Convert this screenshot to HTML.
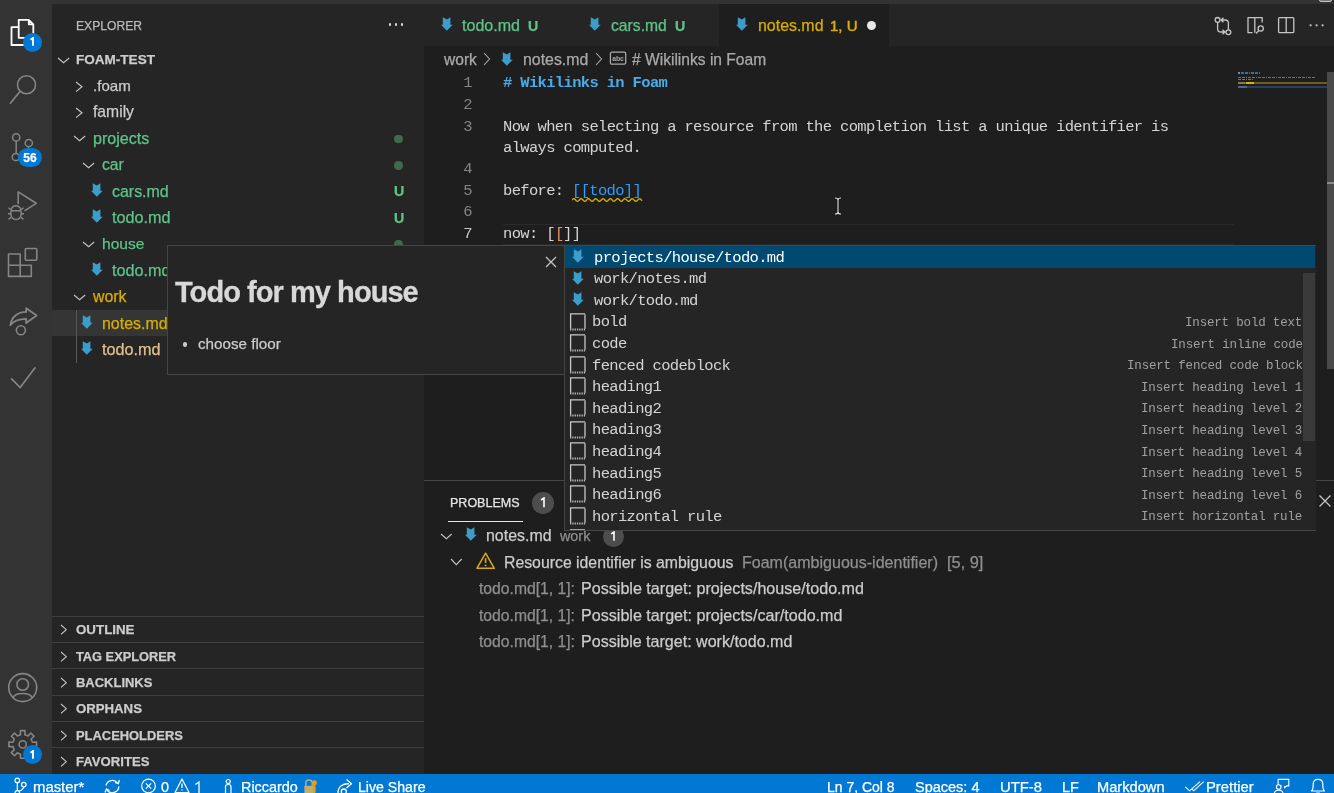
<!DOCTYPE html>
<html><head><meta charset="utf-8"><style>
html,body{margin:0;padding:0;}
body{width:1334px;height:793px;overflow:hidden;position:relative;background:#1e1e1e;}
div,svg{position:absolute;}
svg{will-change:transform;}
.t{white-space:pre;will-change:transform;}
#sg{position:absolute;left:0;top:0;width:1334px;height:793px;overflow:hidden;}
</style></head><body>
<div style="left:0px;top:0px;width:1334px;height:4px;background:#333333;"></div>
<div style="left:0px;top:4px;width:52px;height:770px;background:#333333;"></div>
<div style="left:52px;top:4px;width:372px;height:770px;background:#252526;"></div>
<div style="left:424px;top:4px;width:910px;height:42px;background:#252526;"></div>
<div style="left:719px;top:4px;width:170px;height:42px;background:#1e1e1e;"></div>
<div style="left:424px;top:46px;width:910px;height:728px;background:#1e1e1e;"></div>
<div style="left:0px;top:774px;width:1334px;height:19px;background:#0078d4;"></div>
<svg style="left:0px;top:4px;" width="52" height="52" viewBox="0 0 52 52">
<path d="M18.7 23.1 H11.5 V41 H30" fill="none" stroke="#fff" stroke-width="1.8" stroke-linejoin="round"/>
<path d="M18.7 15.8 H28.8 L33.3 20.3 V33.8 H18.7 Z M28.8 15.8 V20.3 H33.3" fill="none" stroke="#fff" stroke-width="1.8" stroke-linejoin="round"/>
</svg>
<div style="left:23.2px;top:33px;width:18.6px;height:18.6px;background:#0078d4;border-radius:50%"></div>
<svg style="left:28.1px;top:37.3px;" width="8" height="9.700000000000003" viewBox="0 0 8 9.700000000000003"><path d="M2.54 2.69 L5 1 V8.700000000000003" fill="none" stroke="#fff" stroke-width="1.9" stroke-linejoin="miter"/></svg>
<svg style="left:0px;top:60px;" width="52" height="52" viewBox="0 0 52 52">
<circle cx="26.5" cy="24.8" r="9" fill="none" stroke="#858585" stroke-width="1.6"/>
<path d="M20 31.5 L10.5 43" stroke="#858585" stroke-width="1.8" stroke-linecap="round"/>
</svg>
<svg style="left:0px;top:120px;" width="52" height="52" viewBox="0 0 52 52">
<circle cx="16.2" cy="17.4" r="3.6" fill="none" stroke="#858585" stroke-width="1.5"/>
<circle cx="28.8" cy="23" r="3.6" fill="none" stroke="#858585" stroke-width="1.5"/>
<circle cx="15.8" cy="37" r="3.6" fill="none" stroke="#858585" stroke-width="1.5"/>
<path d="M16.2 21 V33.4 M28.8 26.6 Q28 32 19.4 35.5" fill="none" stroke="#858585" stroke-width="1.5"/>
</svg>
<div style="left:18px;top:147.5px;width:23.8px;height:19px;background:#0078d4;border-radius:9.5px"></div>
<div class="t" style="left:18.00px;top:151.00px;font:bold 12px/15.6px 'Liberation Sans', sans-serif;color:#fff;-webkit-text-stroke:0.25px #fff;width:23.8px;text-align:center">56</div>
<svg style="left:0px;top:180px;" width="52" height="52" viewBox="0 0 52 52">
<path d="M18.2 24.3 V11.9 L36.2 23.3 L24.5 30.9" fill="none" stroke="#858585" stroke-width="1.6" stroke-linejoin="round"/>
<path d="M10.8 33 C10.8 28 12.5 25.8 16 25.8 C19.5 25.8 21.2 28 21.2 33 C21.2 37.5 19 39.5 16 39.5 C13 39.5 10.8 37.5 10.8 33 Z M10.9 30.8 H21.1" fill="none" stroke="#858585" stroke-width="1.5"/>
<path d="M8.5 27.8 L10.9 29.6 M8 33.8 H10.8 M8.5 39.4 L11.1 37.4 M23.5 27.8 L21.1 29.6 M24 33.8 H21.2 M23.5 39.4 L20.9 37.4" stroke="#858585" stroke-width="1.4"/>
</svg>
<svg style="left:0px;top:240px;" width="52" height="52" viewBox="0 0 52 52">
<path d="M8.5 14 h11.7 v11.3 h11.1 v11.1 h-22.8 z M8.5 25.3 h11.7 v11.1" fill="none" stroke="#858585" stroke-width="1.6" stroke-linejoin="round"/>
<rect x="25.3" y="8.5" width="11.5" height="11.7" rx="1" fill="none" stroke="#858585" stroke-width="1.6"/>
</svg>
<svg style="left:0px;top:300px;" width="52" height="52" viewBox="0 0 52 52">
<path d="M10.3 25.3 C11.5 17 17.5 11.9 26.2 11.9 V8.2 L36.6 15.6 L26.2 23.1 V18.8 C19.5 18.8 13.5 20.8 10.3 25.3 Z" fill="none" stroke="#858585" stroke-width="1.8" stroke-linejoin="round"/>
<circle cx="20.9" cy="30.3" r="4.5" fill="none" stroke="#858585" stroke-width="1.6"/>
</svg>
<svg style="left:0px;top:360px;" width="52" height="52" viewBox="0 0 52 52">
<path d="M11.1 18.4 L20.2 27.5 L35.4 7.3" fill="none" stroke="#858585" stroke-width="1.7"/>
</svg>
<svg style="left:0px;top:660px;" width="52" height="52" viewBox="0 0 52 52">
<circle cx="22.7" cy="27.6" r="14" fill="none" stroke="#858585" stroke-width="1.6"/>
<circle cx="22.7" cy="24.5" r="5.8" fill="none" stroke="#858585" stroke-width="1.6"/>
<path d="M13 38 C15 32 30 32 32.4 38" fill="none" stroke="#858585" stroke-width="1.6"/>
</svg>
<svg style="left:0px;top:720px;" width="52" height="52" viewBox="0 0 52 52">
<path d="M32.46 22.22 L36.52 22.17 L36.52 26.63 L32.46 26.58 L31.14 29.76 L34.05 32.60 L30.90 35.75 L28.06 32.84 L24.88 34.16 L24.93 38.22 L20.47 38.22 L20.52 34.16 L17.34 32.84 L14.50 35.75 L11.35 32.60 L14.26 29.76 L12.94 26.58 L8.88 26.63 L8.88 22.17 L12.94 22.22 L14.26 19.04 L11.35 16.20 L14.50 13.05 L17.34 15.96 L20.52 14.64 L20.47 10.58 L24.93 10.58 L24.88 14.64 L28.06 15.96 L30.90 13.05 L34.05 16.20 L31.14 19.04 Z" fill="none" stroke="#858585" stroke-width="1.6" stroke-linejoin="round"/>
<circle cx="22.7" cy="24.4" r="3.6" fill="none" stroke="#858585" stroke-width="1.6"/>
</svg>
<div style="left:22.9px;top:745.3px;width:18.8px;height:18.8px;background:#0078d4;border-radius:50%"></div>
<svg style="left:28.1px;top:750.0px;" width="8" height="9.700000000000045" viewBox="0 0 8 9.700000000000045"><path d="M2.54 2.69 L5 1 V8.700000000000045" fill="none" stroke="#fff" stroke-width="1.9" stroke-linejoin="miter"/></svg>
<div class="t" style="left:75.70px;top:19.00px;font:12.12px/15.76px 'Liberation Sans', sans-serif;color:#bbbbbb;-webkit-text-stroke:0.25px #bbbbbb;">EXPLORER</div>
<div style="left:388.7px;top:23.2px;width:2.6px;height:2.6px;background:#dcdcdc;border-radius:50%"></div>
<div style="left:394.7px;top:23.2px;width:2.6px;height:2.6px;background:#dcdcdc;border-radius:50%"></div>
<div style="left:400.7px;top:23.2px;width:2.6px;height:2.6px;background:#dcdcdc;border-radius:50%"></div>
<svg style="left:56.85px;top:56.75px;" width="13.2" height="7.7" viewBox="0 0 13.2 7.7"><path d="M1 1 L6.6 5.7 L12.2 1" fill="none" stroke="#c5c5c5" stroke-width="1.1"/></svg>
<div class="t" style="left:75.50px;top:51.00px;font:bold 13.54px/17.6px 'Liberation Sans', sans-serif;color:#cccccc;-webkit-text-stroke:0.25px #cccccc;">FOAM-TEST</div>
<div style="left:52px;top:310.0px;width:372px;height:26.4px;background:#353535;"></div>
<div style="left:76px;top:310.0px;width:1px;height:52.8px;background:#585858;"></div>
<svg style="left:75.35px;top:81.05000000000001px;" width="9" height="11.6" viewBox="0 0 9 11.6"><path d="M1 1 L7 5.8 L1 10.6" fill="none" stroke="#c5c5c5" stroke-width="1.15"/></svg>
<div class="t" style="left:93.30px;top:76.00px;font:15.12px/19.66px 'Liberation Sans', sans-serif;color:#cccccc;-webkit-text-stroke:0.25px #cccccc;">.foam</div>
<svg style="left:75.35px;top:107.45000000000002px;" width="9" height="11.6" viewBox="0 0 9 11.6"><path d="M1 1 L7 5.8 L1 10.6" fill="none" stroke="#c5c5c5" stroke-width="1.15"/></svg>
<div class="t" style="left:92.90px;top:102.00px;font:15.69px/20.4px 'Liberation Sans', sans-serif;color:#cccccc;-webkit-text-stroke:0.25px #cccccc;">family</div>
<svg style="left:72.75px;top:135.25px;" width="13.2" height="7.7" viewBox="0 0 13.2 7.7"><path d="M1 1 L6.6 5.7 L12.2 1" fill="none" stroke="#c5c5c5" stroke-width="1.1"/></svg>
<div class="t" style="left:92.90px;top:128.00px;font:16.1px/20.93px 'Liberation Sans', sans-serif;color:#5fc488;-webkit-text-stroke:0.25px #5fc488;">projects</div>
<div style="left:394px;top:134.6px;width:8.6px;height:8.6px;background:#3f6a4f;border-radius:50%"></div>
<svg style="left:82.25px;top:161.65px;" width="13.2" height="7.7" viewBox="0 0 13.2 7.7"><path d="M1 1 L6.6 5.7 L12.2 1" fill="none" stroke="#c5c5c5" stroke-width="1.1"/></svg>
<div class="t" style="left:102.20px;top:155.00px;font:15.68px/20.38px 'Liberation Sans', sans-serif;color:#5fc488;-webkit-text-stroke:0.25px #5fc488;">car</div>
<div style="left:394px;top:161.0px;width:8.6px;height:8.6px;background:#3f6a4f;border-radius:50%"></div>
<svg style="left:90.60000000000001px;top:182.79999999999998px;" width="12" height="14" viewBox="0 0 12 14"><path d="M1.8 0.3 L5.8 2.4 L9.4 0.3 L9.4 7.8 L11.8 7.8 L5.8 13.7 L0 7.8 L1.8 7.8 Z" fill="#3b9dc9"/></svg>
<div class="t" style="left:111.60px;top:182.00px;font:15.95px/20.73px 'Liberation Sans', sans-serif;color:#5fc488;-webkit-text-stroke:0.25px #5fc488;">cars.md</div>
<div class="t" style="left:394.00px;top:182.00px;font:bold 14.2px/18.46px 'Liberation Sans', sans-serif;color:#5fc488;-webkit-text-stroke:0.25px #5fc488;">U</div>
<svg style="left:90.60000000000001px;top:209.2px;" width="12" height="14" viewBox="0 0 12 14"><path d="M1.8 0.3 L5.8 2.4 L9.4 0.3 L9.4 7.8 L11.8 7.8 L5.8 13.7 L0 7.8 L1.8 7.8 Z" fill="#3b9dc9"/></svg>
<div class="t" style="left:111.60px;top:207.00px;font:16.22px/21.09px 'Liberation Sans', sans-serif;color:#5fc488;-webkit-text-stroke:0.25px #5fc488;">todo.md</div>
<div class="t" style="left:394.00px;top:209.00px;font:bold 14.2px/18.46px 'Liberation Sans', sans-serif;color:#5fc488;-webkit-text-stroke:0.25px #5fc488;">U</div>
<svg style="left:82.25px;top:240.85px;" width="13.2" height="7.7" viewBox="0 0 13.2 7.7"><path d="M1 1 L6.6 5.7 L12.2 1" fill="none" stroke="#c5c5c5" stroke-width="1.1"/></svg>
<div class="t" style="left:102.40px;top:234.00px;font:15.56px/20.23px 'Liberation Sans', sans-serif;color:#5fc488;-webkit-text-stroke:0.25px #5fc488;">house</div>
<div style="left:394px;top:240.2px;width:8.6px;height:8.6px;background:#3f6a4f;border-radius:50%"></div>
<svg style="left:90.60000000000001px;top:262.0px;" width="12" height="14" viewBox="0 0 12 14"><path d="M1.8 0.3 L5.8 2.4 L9.4 0.3 L9.4 7.8 L11.8 7.8 L5.8 13.7 L0 7.8 L1.8 7.8 Z" fill="#3b9dc9"/></svg>
<div class="t" style="left:111.80px;top:260.00px;font:16.22px/21.09px 'Liberation Sans', sans-serif;color:#5fc488;-webkit-text-stroke:0.25px #5fc488;">todo.md</div>
<svg style="left:72.75px;top:293.65000000000003px;" width="13.2" height="7.7" viewBox="0 0 13.2 7.7"><path d="M1 1 L6.6 5.7 L12.2 1" fill="none" stroke="#c5c5c5" stroke-width="1.1"/></svg>
<div class="t" style="left:92.74px;top:287.00px;font:15.87px/20.63px 'Liberation Sans', sans-serif;color:#d9ae00;-webkit-text-stroke:0.25px #d9ae00;">work</div>
<svg style="left:80.9px;top:314.8px;" width="12" height="14" viewBox="0 0 12 14"><path d="M1.8 0.3 L5.8 2.4 L9.4 0.3 L9.4 7.8 L11.8 7.8 L5.8 13.7 L0 7.8 L1.8 7.8 Z" fill="#3b9dc9"/></svg>
<div class="t" style="left:102.40px;top:314.00px;font:15.95px/20.73px 'Liberation Sans', sans-serif;color:#d9ae00;-webkit-text-stroke:0.25px #d9ae00;">notes.md</div>
<svg style="left:80.9px;top:341.2px;" width="12" height="14" viewBox="0 0 12 14"><path d="M1.8 0.3 L5.8 2.4 L9.4 0.3 L9.4 7.8 L11.8 7.8 L5.8 13.7 L0 7.8 L1.8 7.8 Z" fill="#3b9dc9"/></svg>
<div class="t" style="left:102.20px;top:339.00px;font:16.22px/21.09px 'Liberation Sans', sans-serif;color:#e2c08d;-webkit-text-stroke:0.25px #e2c08d;">todo.md</div>
<div style="left:52px;top:615.7px;width:372px;height:1px;background:#3f3f3f;"></div>
<svg style="left:60.35px;top:624.25px;" width="8.3" height="11.4" viewBox="0 0 8.3 11.4"><path d="M1 1 L6.3 5.7 L1 10.4" fill="none" stroke="#c5c5c5" stroke-width="1.1"/></svg>
<div class="t" style="left:75.80px;top:621.00px;font:bold 13.33px/17.33px 'Liberation Sans', sans-serif;color:#cccccc;-webkit-text-stroke:0.25px #cccccc;">OUTLINE</div>
<div style="left:52px;top:642.0300000000001px;width:372px;height:1px;background:#3f3f3f;"></div>
<svg style="left:60.35px;top:650.58px;" width="8.3" height="11.4" viewBox="0 0 8.3 11.4"><path d="M1 1 L6.3 5.7 L1 10.4" fill="none" stroke="#c5c5c5" stroke-width="1.1"/></svg>
<div class="t" style="left:75.80px;top:649.00px;font:bold 12.81px/16.65px 'Liberation Sans', sans-serif;color:#cccccc;-webkit-text-stroke:0.25px #cccccc;">TAG EXPLORER</div>
<div style="left:52px;top:668.36px;width:372px;height:1px;background:#3f3f3f;"></div>
<svg style="left:60.35px;top:676.91px;" width="8.3" height="11.4" viewBox="0 0 8.3 11.4"><path d="M1 1 L6.3 5.7 L1 10.4" fill="none" stroke="#c5c5c5" stroke-width="1.1"/></svg>
<div class="t" style="left:75.80px;top:675.00px;font:bold 12.97px/16.86px 'Liberation Sans', sans-serif;color:#cccccc;-webkit-text-stroke:0.25px #cccccc;">BACKLINKS</div>
<div style="left:52px;top:694.69px;width:372px;height:1px;background:#3f3f3f;"></div>
<svg style="left:60.35px;top:703.24px;" width="8.3" height="11.4" viewBox="0 0 8.3 11.4"><path d="M1 1 L6.3 5.7 L1 10.4" fill="none" stroke="#c5c5c5" stroke-width="1.1"/></svg>
<div class="t" style="left:75.80px;top:700.00px;font:bold 13.2px/17.16px 'Liberation Sans', sans-serif;color:#cccccc;-webkit-text-stroke:0.25px #cccccc;">ORPHANS</div>
<div style="left:52px;top:721.02px;width:372px;height:1px;background:#3f3f3f;"></div>
<svg style="left:60.35px;top:729.5699999999999px;" width="8.3" height="11.4" viewBox="0 0 8.3 11.4"><path d="M1 1 L6.3 5.7 L1 10.4" fill="none" stroke="#c5c5c5" stroke-width="1.1"/></svg>
<div class="t" style="left:75.80px;top:728.00px;font:bold 12.91px/16.78px 'Liberation Sans', sans-serif;color:#cccccc;-webkit-text-stroke:0.25px #cccccc;">PLACEHOLDERS</div>
<div style="left:52px;top:747.35px;width:372px;height:1px;background:#3f3f3f;"></div>
<svg style="left:60.35px;top:755.9px;" width="8.3" height="11.4" viewBox="0 0 8.3 11.4"><path d="M1 1 L6.3 5.7 L1 10.4" fill="none" stroke="#c5c5c5" stroke-width="1.1"/></svg>
<div class="t" style="left:75.80px;top:753.00px;font:bold 13.14px/17.08px 'Liberation Sans', sans-serif;color:#cccccc;-webkit-text-stroke:0.25px #cccccc;">FAVORITES</div>
<div class="t" style="left:462.20px;top:15.00px;font:16.06px/20.88px 'Liberation Sans', sans-serif;color:#5fc488;-webkit-text-stroke:0.25px #5fc488;">todo.md</div>
<div class="t" style="left:528.00px;top:17.00px;font:bold 14.2px/18.46px 'Liberation Sans', sans-serif;color:#5fc488;-webkit-text-stroke:0.25px #5fc488;">U</div>
<svg style="left:440.9px;top:16.7px;" width="12" height="14" viewBox="0 0 12 14"><path d="M1.8 0.3 L5.8 2.4 L9.4 0.3 L9.4 7.8 L11.8 7.8 L5.8 13.7 L0 7.8 L1.8 7.8 Z" fill="#3b9dc9"/></svg>
<div class="t" style="left:611.10px;top:16.00px;font:15.7px/20.41px 'Liberation Sans', sans-serif;color:#5fc488;-webkit-text-stroke:0.25px #5fc488;">cars.md</div>
<div class="t" style="left:674.80px;top:17.00px;font:bold 14.2px/18.46px 'Liberation Sans', sans-serif;color:#5fc488;-webkit-text-stroke:0.25px #5fc488;">U</div>
<svg style="left:589.4px;top:16.7px;" width="12" height="14" viewBox="0 0 12 14"><path d="M1.8 0.3 L5.8 2.4 L9.4 0.3 L9.4 7.8 L11.8 7.8 L5.8 13.7 L0 7.8 L1.8 7.8 Z" fill="#3b9dc9"/></svg>
<svg style="left:736.4px;top:16.7px;" width="12" height="14" viewBox="0 0 12 14"><path d="M1.8 0.3 L5.8 2.4 L9.4 0.3 L9.4 7.8 L11.8 7.8 L5.8 13.7 L0 7.8 L1.8 7.8 Z" fill="#3b9dc9"/></svg>
<div class="t" style="left:757.70px;top:16.00px;font:15.93px/20.71px 'Liberation Sans', sans-serif;color:#d9ae00;-webkit-text-stroke:0.25px #d9ae00;">notes.md</div>
<div class="t" style="left:829.80px;top:16.00px;font:15px/19.5px 'Liberation Sans', sans-serif;color:#d9ae00;-webkit-text-stroke:0.5px #d9ae00;">1, U</div>
<div style="left:866.8px;top:20.6px;width:9.6px;height:9.6px;background:#e8e8e8;border-radius:50%"></div>
<svg style="left:1205px;top:10px;" width="120" height="32" viewBox="0 0 120 32">
<circle cx="12.6" cy="9.9" r="2.4" fill="none" stroke="#c5c5c5" stroke-width="1.3"/>
<circle cx="23.4" cy="22.2" r="2.4" fill="none" stroke="#c5c5c5" stroke-width="1.3"/>
<path d="M12.6 12.3 V19 Q12.6 22 16 22 H19.5 M17.5 19.8 L20 22 L17.5 24.2" fill="none" stroke="#c5c5c5" stroke-width="1.3"/>
<path d="M23.4 19.8 V13 Q23.4 10 20 10 H16.5 M18.5 7.8 L16 10 L18.5 12.2" fill="none" stroke="#c5c5c5" stroke-width="1.3"/>
<path d="M47.5 22.7 H43 V7.6 H57.2 V12.5 M49.8 7.6 V22.7" fill="none" stroke="#c5c5c5" stroke-width="1.3" stroke-linejoin="round"/>
<circle cx="55.7" cy="18.5" r="2.6" fill="none" stroke="#c5c5c5" stroke-width="1.3"/>
<path d="M53.8 20.5 L51 23.5" stroke="#c5c5c5" stroke-width="1.3"/>
<rect x="73.6" y="7.6" width="15.2" height="15.1" rx="1" fill="none" stroke="#c5c5c5" stroke-width="1.3"/>
<path d="M81.2 7.6 V22.7" stroke="#c5c5c5" stroke-width="1.3"/>
<circle cx="105.6" cy="15.3" r="1.1" fill="#c5c5c5"/><circle cx="111.6" cy="15.3" r="1.1" fill="#c5c5c5"/><circle cx="117.6" cy="15.3" r="1.1" fill="#c5c5c5"/>
</svg>
<div style="left:1319px;top:-4px;width:13px;height:6px;background:#777777;border:1px solid #c4c4c4;border-radius:2px;box-sizing:border-box"></div>
<div class="t" style="left:443.54px;top:50.00px;font:15.58px/20.25px 'Liberation Sans', sans-serif;color:#a9a9a9;-webkit-text-stroke:0.25px #a9a9a9;">work</div>
<svg style="left:483.3px;top:52.3px;" width="8.5" height="14" viewBox="0 0 8.5 14"><path d="M1 1 L6.5 7.0 L1 13" fill="none" stroke="#a9a9a9" stroke-width="1.1"/></svg>
<svg style="left:501.0px;top:51.5px;" width="12" height="14" viewBox="0 0 12 14"><path d="M1.8 0.3 L5.8 2.4 L9.4 0.3 L9.4 7.8 L11.8 7.8 L5.8 13.7 L0 7.8 L1.8 7.8 Z" fill="#3b9dc9"/></svg>
<div class="t" style="left:523.00px;top:50.00px;font:15.88px/20.64px 'Liberation Sans', sans-serif;color:#a9a9a9;-webkit-text-stroke:0.25px #a9a9a9;">notes.md</div>
<svg style="left:595px;top:52.3px;" width="8.5" height="14" viewBox="0 0 8.5 14"><path d="M1 1 L6.5 7.0 L1 13" fill="none" stroke="#a9a9a9" stroke-width="1.1"/></svg>
<svg style="left:609px;top:50.6px;" width="18" height="15" viewBox="0 0 18 15"><rect x="1.4" y="1.2" width="15.3" height="12" rx="1.5" fill="none" stroke="#a9a9a9" stroke-width="1.3"/><text x="9" y="9.6" font-family="Liberation Sans" font-weight="bold" font-size="6.8" fill="#a9a9a9" text-anchor="middle">abc</text></svg>
<div class="t" style="left:631.50px;top:50.00px;font:15.59px/20.27px 'Liberation Sans', sans-serif;color:#a9a9a9;-webkit-text-stroke:0.25px #a9a9a9;"># Wikilinks in Foam</div>
<div class="t" style="left:446.00px;top:73.00px;font:15.5px/20.15px 'Liberation Mono', monospace;color:#858585;letter-spacing:-0.66px;width:26px;text-align:right">1</div>
<div class="t" style="left:446.00px;top:95.00px;font:15.5px/20.15px 'Liberation Mono', monospace;color:#858585;letter-spacing:-0.66px;width:26px;text-align:right">2</div>
<div class="t" style="left:446.00px;top:117.00px;font:15.5px/20.15px 'Liberation Mono', monospace;color:#858585;letter-spacing:-0.66px;width:26px;text-align:right">3</div>
<div class="t" style="left:446.00px;top:159.00px;font:15.5px/20.15px 'Liberation Mono', monospace;color:#858585;letter-spacing:-0.66px;width:26px;text-align:right">4</div>
<div class="t" style="left:446.00px;top:181.00px;font:15.5px/20.15px 'Liberation Mono', monospace;color:#858585;letter-spacing:-0.66px;width:26px;text-align:right">5</div>
<div class="t" style="left:446.00px;top:202.00px;font:15.5px/20.15px 'Liberation Mono', monospace;color:#858585;letter-spacing:-0.66px;width:26px;text-align:right">6</div>
<div class="t" style="left:446.00px;top:224.00px;font:15.5px/20.15px 'Liberation Mono', monospace;color:#c6c6c6;letter-spacing:-0.66px;width:26px;text-align:right">7</div>
<div style="left:502.5px;top:224.4px;width:731.5px;height:20.6px;background:transparent;border-top:1px solid #2a2a2a;border-bottom:1px solid #2a2a2a;box-sizing:border-box"></div>
<div class="t" style="left:502.70px;top:73.00px;font:bold 15.5px/20.15px 'Liberation Mono', monospace;color:#4aabe9;letter-spacing:-0.66px"># Wikilinks in Foam</div>
<div class="t" style="left:502.70px;top:117.00px;font:15.5px/20.15px 'Liberation Mono', monospace;color:#d4d4d4;letter-spacing:-0.66px">Now when selecting a resource from the completion list a unique identifier is</div>
<div class="t" style="left:502.70px;top:138.00px;font:15.5px/20.15px 'Liberation Mono', monospace;color:#d4d4d4;letter-spacing:-0.66px">always computed.</div>
<div class="t" style="left:502.70px;top:181.00px;font:15.5px/20.15px 'Liberation Mono', monospace;color:#d4d4d4;letter-spacing:-0.66px">before: </div>
<div class="t" style="left:571.82px;top:181.00px;font:15.5px/20.15px 'Liberation Mono', monospace;color:#2a9dff;letter-spacing:-0.66px">[[todo]]</div>
<svg style="left:572px;top:197.4px;" width="72" height="6" viewBox="0 0 72 6"><path d="M0.00 3.00 L0.50 2.46 L1.00 2.01 L1.50 1.75 L2.00 1.71 L2.50 1.91 L3.00 2.31 L3.50 2.83 L4.00 3.39 L4.50 3.87 L5.00 4.19 L5.50 4.30 L6.00 4.17 L6.50 3.83 L7.00 3.33 L7.50 2.78 L8.00 2.26 L8.50 1.88 L9.00 1.71 L9.50 1.77 L10.00 2.05 L10.50 2.51 L11.00 3.06 L11.50 3.59 L12.00 4.02 L12.50 4.26 L13.00 4.28 L13.50 4.06 L14.00 3.64 L14.50 3.11 L15.00 2.56 L15.50 2.09 L16.00 1.79 L16.50 1.70 L17.00 1.86 L17.50 2.22 L18.00 2.72 L18.50 3.28 L19.00 3.78 L19.50 4.14 L20.00 4.30 L20.50 4.21 L21.00 3.91 L21.50 3.44 L22.00 2.89 L22.50 2.36 L23.00 1.94 L23.50 1.72 L24.00 1.74 L24.50 1.98 L25.00 2.41 L25.50 2.94 L26.00 3.49 L26.50 3.95 L27.00 4.23 L27.50 4.29 L28.00 4.12 L28.50 3.74 L29.00 3.22 L29.50 2.67 L30.00 2.17 L30.50 1.83 L31.00 1.70 L31.50 1.81 L32.00 2.13 L32.50 2.61 L33.00 3.17 L33.50 3.69 L34.00 4.09 L34.50 4.29 L35.00 4.25 L35.50 3.99 L36.00 3.54 L36.50 3.00 L37.00 2.46 L37.50 2.01 L38.00 1.75 L38.50 1.71 L39.00 1.91 L39.50 2.31 L40.00 2.83 L40.50 3.39 L41.00 3.87 L41.50 4.19 L42.00 4.30 L42.50 4.17 L43.00 3.83 L43.50 3.33 L44.00 2.78 L44.50 2.26 L45.00 1.88 L45.50 1.71 L46.00 1.77 L46.50 2.05 L47.00 2.51 L47.50 3.06 L48.00 3.59 L48.50 4.02 L49.00 4.26 L49.50 4.28 L50.00 4.06 L50.50 3.64 L51.00 3.11 L51.50 2.56 L52.00 2.09 L52.50 1.79 L53.00 1.70 L53.50 1.86 L54.00 2.22 L54.50 2.72 L55.00 3.28 L55.50 3.78 L56.00 4.14 L56.50 4.30 L57.00 4.21 L57.50 3.91 L58.00 3.44 L58.50 2.89 L59.00 2.36 L59.50 1.94 L60.00 1.72 L60.50 1.74 L61.00 1.98 L61.50 2.41 L62.00 2.94 L62.50 3.49 L63.00 3.95 L63.50 4.23 L64.00 4.29 L64.50 4.12 L65.00 3.74 L65.50 3.22 L66.00 2.67 L66.50 2.17 L67.00 1.83 L67.50 1.70 L68.00 1.81 L68.50 2.13 L69.00 2.61 L69.50 3.17 L70.00 3.69" fill="none" stroke="#d2a800" stroke-width="1.4"/></svg>
<div class="t" style="left:502.70px;top:224.00px;font:15.5px/20.15px 'Liberation Mono', monospace;color:#d4d4d4;letter-spacing:-0.66px">now: [</div>
<div class="t" style="left:554.54px;top:224.00px;font:15.5px/20.15px 'Liberation Mono', monospace;color:#e8926b;letter-spacing:-0.66px">[</div>
<div class="t" style="left:563.18px;top:224.00px;font:15.5px/20.15px 'Liberation Mono', monospace;color:#d4d4d4;letter-spacing:-0.66px">]]</div>
<div style="left:1238px;top:72px;width:2px;height:1.8px;background:#4a9ad0;"></div>
<div style="left:1241px;top:72px;width:19px;height:1.8px;background:repeating-linear-gradient(90deg, #35709a 0 3px, transparent 3px 4px, #35709a 4px 7px, transparent 7px 8px, #35709a 8px 9px, transparent 9px 10px);"></div>
<div style="left:1238px;top:76.5px;width:77px;height:1.6px;background:repeating-linear-gradient(90deg, #707070 0 3px, transparent 3px 4px, #707070 4px 7px, transparent 7px 8px, #707070 8px 9px, transparent 9px 10px);"></div>
<div style="left:1238px;top:78.8px;width:15px;height:1.6px;background:repeating-linear-gradient(90deg, #707070 0 3px, transparent 3px 4px, #707070 4px 7px, transparent 7px 8px, #707070 8px 9px, transparent 9px 10px);"></div>
<div style="left:1238px;top:82px;width:89px;height:2.2px;background:#6b5a22;"></div>
<div style="left:1238px;top:82px;width:7px;height:2.2px;background:#8a7c4c;"></div>
<div style="left:1246px;top:82px;width:8px;height:2.2px;background:#d9b300;"></div>
<div style="left:1238px;top:86px;width:89px;height:2.2px;background:#2a3f55;"></div>
<div style="left:1238px;top:86px;width:9px;height:2.2px;background:#4f6a80;"></div>
<div style="left:1327px;top:72px;width:7px;height:297px;background:#4a4a4a;"></div>
<div style="left:1327px;top:181.5px;width:7px;height:2px;background:#8a8a8a;"></div>
<svg style="left:832px;top:197px;" width="12" height="18" viewBox="0 0 12 18"><path d="M3 1 Q6 1 6 3 Q6 1 9 1 M6 3 V15 M3 17 Q6 17 6 15 Q6 17 9 17" fill="none" stroke="#111" stroke-width="2.4"/><path d="M3 1 Q6 1 6 3 Q6 1 9 1 M6 3 V15 M3 17 Q6 17 6 15 Q6 17 9 17" fill="none" stroke="#e8e8e8" stroke-width="1.1"/></svg>
<div style="left:424px;top:480.2px;width:910px;height:1px;background:#454545;"></div>
<div class="t" style="left:450.20px;top:495.00px;font:12.52px/16.28px 'Liberation Sans', sans-serif;color:#e7e7e7;-webkit-text-stroke:0.25px #e7e7e7;">PROBLEMS</div>
<div style="left:448px;top:520.8px;width:75px;height:1.2px;background:#e7e7e7;"></div>
<div style="left:532px;top:492.2px;width:21.6px;height:21.6px;background:#4d4d4d;border-radius:50%"></div>
<svg style="left:538.6px;top:496.8px;" width="8" height="11.199999999999989" viewBox="0 0 8 11.199999999999989"><path d="M2.06 3.02 L5 1 V10.199999999999989" fill="none" stroke="#fff" stroke-width="1.6" stroke-linejoin="miter"/></svg>
<svg style="left:1318px;top:494px;" width="14" height="14" viewBox="0 0 14 14"><path d="M1.5 1.5 L12.5 12.5 M12.5 1.5 L1.5 12.5" stroke="#c5c5c5" stroke-width="1.3"/></svg>
<svg style="left:439.75px;top:532.95px;" width="12.7" height="7.7" viewBox="0 0 12.7 7.7"><path d="M1 1 L6.35 5.7 L11.7 1" fill="none" stroke="#c5c5c5" stroke-width="1.1"/></svg>
<svg style="left:464.79999999999995px;top:527.0px;" width="12" height="14" viewBox="0 0 12 14"><path d="M1.8 0.3 L5.8 2.4 L9.4 0.3 L9.4 7.8 L11.8 7.8 L5.8 13.7 L0 7.8 L1.8 7.8 Z" fill="#3b9dc9"/></svg>
<div class="t" style="left:486.40px;top:526.00px;font:15.95px/20.73px 'Liberation Sans', sans-serif;color:#cccccc;-webkit-text-stroke:0.25px #cccccc;">notes.md</div>
<div class="t" style="left:559.94px;top:527.00px;font:14.36px/18.67px 'Liberation Sans', sans-serif;color:#8f8f8f;-webkit-text-stroke:0.25px #8f8f8f;">work</div>
<div style="left:603px;top:526px;width:21px;height:21px;background:#4d4d4d;border-radius:50%"></div>
<svg style="left:608.8px;top:531.2px;" width="8" height="10.799999999999955" viewBox="0 0 8 10.799999999999955"><path d="M2.18 2.94 L5 1 V9.799999999999955" fill="none" stroke="#fff" stroke-width="1.6" stroke-linejoin="miter"/></svg>
<svg style="left:449.75px;top:558.05px;" width="12.7" height="8.6" viewBox="0 0 12.7 8.6"><path d="M1 1 L6.35 6.6 L11.7 1" fill="none" stroke="#c5c5c5" stroke-width="1.1"/></svg>
<svg style="left:476px;top:552px;" width="20" height="18" viewBox="0 0 20 18"><path d="M9.6 1.2 L18.3 16.3 H0.9 Z" fill="none" stroke="#d4ac0d" stroke-width="1.5" stroke-linejoin="round"/><path d="M9.6 6.2 V11" stroke="#d4ac0d" stroke-width="1.6"/><circle cx="9.6" cy="13.4" r="0.95" fill="#d4ac0d"/></svg>
<div class="t" style="left:503.80px;top:553.00px;font:15.82px/20.57px 'Liberation Sans', sans-serif;color:#cccccc;-webkit-text-stroke:0.25px #cccccc;">Resource identifier is ambiguous</div>
<div class="t" style="left:741.60px;top:552.00px;font:16.05px/20.87px 'Liberation Sans', sans-serif;color:#8f8f8f;-webkit-text-stroke:0.25px #8f8f8f;">Foam(ambiguous-identifier)</div>
<div class="t" style="left:947.40px;top:552.00px;font:16.36px/21.27px 'Liberation Sans', sans-serif;color:#8f8f8f;-webkit-text-stroke:0.25px #8f8f8f;">[5, 9]</div>
<div class="t" style="left:479.00px;top:579.00px;font:15.7px/20.41px 'Liberation Sans', sans-serif;color:#8f8f8f;-webkit-text-stroke:0.25px #8f8f8f;">todo.md[1, 1]:</div>
<div class="t" style="left:580.70px;top:578.00px;font:16.11px/20.94px 'Liberation Sans', sans-serif;color:#cccccc;-webkit-text-stroke:0.25px #cccccc;">Possible target: projects/house/todo.md</div>
<div class="t" style="left:479.00px;top:606.00px;font:15.7px/20.41px 'Liberation Sans', sans-serif;color:#8f8f8f;-webkit-text-stroke:0.25px #8f8f8f;">todo.md[1, 1]:</div>
<div class="t" style="left:580.70px;top:605.00px;font:16.11px/20.94px 'Liberation Sans', sans-serif;color:#cccccc;-webkit-text-stroke:0.25px #cccccc;">Possible target: projects/car/todo.md</div>
<div class="t" style="left:479.00px;top:632.00px;font:15.7px/20.41px 'Liberation Sans', sans-serif;color:#8f8f8f;-webkit-text-stroke:0.25px #8f8f8f;">todo.md[1, 1]:</div>
<div class="t" style="left:580.70px;top:631.00px;font:16.06px/20.88px 'Liberation Sans', sans-serif;color:#cccccc;-webkit-text-stroke:0.25px #cccccc;">Possible target: work/todo.md</div>
<div style="left:167px;top:245.4px;width:398px;height:129.6px;background:#252526;border:1px solid #454545;box-sizing:border-box"></div>
<svg style="left:545px;top:255.5px;" width="12" height="12" viewBox="0 0 12 12"><path d="M1 1 L11 11 M11 1 L1 11" stroke="#c5c5c5" stroke-width="1.3"/></svg>
<div class="t" style="left:175.10px;top:274.00px;font:bold 29px/37.7px 'Liberation Sans', sans-serif;color:#d8d8d8;letter-spacing:-0.945px;-webkit-text-stroke:0.3px #d8d8d8;">Todo for my house</div>
<div style="left:182.5px;top:342.2px;width:4.4px;height:4.4px;background:#cccccc;border-radius:50%"></div>
<div class="t" style="left:198.40px;top:334.00px;font:15.2px/19.76px 'Liberation Sans', sans-serif;color:#cccccc;-webkit-text-stroke:0.25px #cccccc;">choose floor</div>
<div style="left:564px;top:245px;width:752px;height:286px;background:#252526;border:1px solid #454545;border-right:0;box-sizing:border-box"></div>
<div style="left:565px;top:246.2px;width:750px;height:21.5px;background:#004a72;"></div>
<div style="left:0;top:0;width:1334px;height:793px;clip-path:inset(246px 19px 263px 565px)">
<svg style="left:572.1px;top:249.2px;" width="12" height="14" viewBox="0 0 12 14"><path d="M1.8 0.3 L5.8 2.4 L9.4 0.3 L9.4 7.8 L11.8 7.8 L5.8 13.7 L0 7.8 L1.8 7.8 Z" fill="#3b9dc9"/></svg>
<div class="t" style="left:594.30px;top:248.00px;font:15.5px/20.15px 'Liberation Mono', monospace;color:#ffffff;letter-spacing:-0.66px">projects/house/todo.md</div>
<svg style="left:572.1px;top:270.8px;" width="12" height="14" viewBox="0 0 12 14"><path d="M1.8 0.3 L5.8 2.4 L9.4 0.3 L9.4 7.8 L11.8 7.8 L5.8 13.7 L0 7.8 L1.8 7.8 Z" fill="#3b9dc9"/></svg>
<div class="t" style="left:594.30px;top:269.00px;font:15.5px/20.15px 'Liberation Mono', monospace;color:#d4d4d4;letter-spacing:-0.66px">work/notes.md</div>
<svg style="left:572.1px;top:292.4px;" width="12" height="14" viewBox="0 0 12 14"><path d="M1.8 0.3 L5.8 2.4 L9.4 0.3 L9.4 7.8 L11.8 7.8 L5.8 13.7 L0 7.8 L1.8 7.8 Z" fill="#3b9dc9"/></svg>
<div class="t" style="left:594.30px;top:291.00px;font:15.5px/20.15px 'Liberation Mono', monospace;color:#d4d4d4;letter-spacing:-0.66px">work/todo.md</div>
<svg style="left:569px;top:312.6px;" width="18" height="18" viewBox="0 0 18 18"><path d="M1.6 15.8 V0.95 H16" fill="none" stroke="#c8c8c8" stroke-width="1.3"/><path d="M16 1.2 V15.8" stroke="#9a9a9a" stroke-width="1.8"/><path d="M1 16.5 H16.9" stroke="#b8b8b8" stroke-width="1.8" stroke-dasharray="1.3 1"/></svg>
<div class="t" style="left:592.20px;top:312.00px;font:15.5px/20.15px 'Liberation Mono', monospace;color:#d4d4d4;letter-spacing:-0.66px">bold</div>
<div class="t" style="left:1185.40px;top:315.00px;font:12.5px/16.25px 'Liberation Mono', monospace;color:#a0a0a0;letter-spacing:-0.18px">Insert bold text</div>
<svg style="left:569px;top:334.20000000000005px;" width="18" height="18" viewBox="0 0 18 18"><path d="M1.6 15.8 V0.95 H16" fill="none" stroke="#c8c8c8" stroke-width="1.3"/><path d="M16 1.2 V15.8" stroke="#9a9a9a" stroke-width="1.8"/><path d="M1 16.5 H16.9" stroke="#b8b8b8" stroke-width="1.8" stroke-dasharray="1.3 1"/></svg>
<div class="t" style="left:592.20px;top:334.00px;font:15.5px/20.15px 'Liberation Mono', monospace;color:#d4d4d4;letter-spacing:-0.66px">code</div>
<div class="t" style="left:1170.76px;top:337.00px;font:12.5px/16.25px 'Liberation Mono', monospace;color:#a0a0a0;letter-spacing:-0.18px">Insert inline code</div>
<svg style="left:569px;top:355.8px;" width="18" height="18" viewBox="0 0 18 18"><path d="M1.6 15.8 V0.95 H16" fill="none" stroke="#c8c8c8" stroke-width="1.3"/><path d="M16 1.2 V15.8" stroke="#9a9a9a" stroke-width="1.8"/><path d="M1 16.5 H16.9" stroke="#b8b8b8" stroke-width="1.8" stroke-dasharray="1.3 1"/></svg>
<div class="t" style="left:592.20px;top:356.00px;font:15.5px/20.15px 'Liberation Mono', monospace;color:#d4d4d4;letter-spacing:-0.66px">fenced codeblock</div>
<div class="t" style="left:1126.84px;top:358.00px;font:12.5px/16.25px 'Liberation Mono', monospace;color:#a0a0a0;letter-spacing:-0.18px">Insert fenced code block</div>
<svg style="left:569px;top:377.40000000000003px;" width="18" height="18" viewBox="0 0 18 18"><path d="M1.6 15.8 V0.95 H16" fill="none" stroke="#c8c8c8" stroke-width="1.3"/><path d="M16 1.2 V15.8" stroke="#9a9a9a" stroke-width="1.8"/><path d="M1 16.5 H16.9" stroke="#b8b8b8" stroke-width="1.8" stroke-dasharray="1.3 1"/></svg>
<div class="t" style="left:592.20px;top:377.00px;font:15.5px/20.15px 'Liberation Mono', monospace;color:#d4d4d4;letter-spacing:-0.66px">heading1</div>
<div class="t" style="left:1141.48px;top:380.00px;font:12.5px/16.25px 'Liberation Mono', monospace;color:#a0a0a0;letter-spacing:-0.18px">Insert heading level 1</div>
<svg style="left:569px;top:399.0px;" width="18" height="18" viewBox="0 0 18 18"><path d="M1.6 15.8 V0.95 H16" fill="none" stroke="#c8c8c8" stroke-width="1.3"/><path d="M16 1.2 V15.8" stroke="#9a9a9a" stroke-width="1.8"/><path d="M1 16.5 H16.9" stroke="#b8b8b8" stroke-width="1.8" stroke-dasharray="1.3 1"/></svg>
<div class="t" style="left:592.20px;top:399.00px;font:15.5px/20.15px 'Liberation Mono', monospace;color:#d4d4d4;letter-spacing:-0.66px">heading2</div>
<div class="t" style="left:1141.48px;top:401.00px;font:12.5px/16.25px 'Liberation Mono', monospace;color:#a0a0a0;letter-spacing:-0.18px">Insert heading level 2</div>
<svg style="left:569px;top:420.6px;" width="18" height="18" viewBox="0 0 18 18"><path d="M1.6 15.8 V0.95 H16" fill="none" stroke="#c8c8c8" stroke-width="1.3"/><path d="M16 1.2 V15.8" stroke="#9a9a9a" stroke-width="1.8"/><path d="M1 16.5 H16.9" stroke="#b8b8b8" stroke-width="1.8" stroke-dasharray="1.3 1"/></svg>
<div class="t" style="left:592.20px;top:420.00px;font:15.5px/20.15px 'Liberation Mono', monospace;color:#d4d4d4;letter-spacing:-0.66px">heading3</div>
<div class="t" style="left:1141.48px;top:423.00px;font:12.5px/16.25px 'Liberation Mono', monospace;color:#a0a0a0;letter-spacing:-0.18px">Insert heading level 3</div>
<svg style="left:569px;top:442.20000000000005px;" width="18" height="18" viewBox="0 0 18 18"><path d="M1.6 15.8 V0.95 H16" fill="none" stroke="#c8c8c8" stroke-width="1.3"/><path d="M16 1.2 V15.8" stroke="#9a9a9a" stroke-width="1.8"/><path d="M1 16.5 H16.9" stroke="#b8b8b8" stroke-width="1.8" stroke-dasharray="1.3 1"/></svg>
<div class="t" style="left:592.20px;top:442.00px;font:15.5px/20.15px 'Liberation Mono', monospace;color:#d4d4d4;letter-spacing:-0.66px">heading4</div>
<div class="t" style="left:1141.48px;top:445.00px;font:12.5px/16.25px 'Liberation Mono', monospace;color:#a0a0a0;letter-spacing:-0.18px">Insert heading level 4</div>
<svg style="left:569px;top:463.8px;" width="18" height="18" viewBox="0 0 18 18"><path d="M1.6 15.8 V0.95 H16" fill="none" stroke="#c8c8c8" stroke-width="1.3"/><path d="M16 1.2 V15.8" stroke="#9a9a9a" stroke-width="1.8"/><path d="M1 16.5 H16.9" stroke="#b8b8b8" stroke-width="1.8" stroke-dasharray="1.3 1"/></svg>
<div class="t" style="left:592.20px;top:464.00px;font:15.5px/20.15px 'Liberation Mono', monospace;color:#d4d4d4;letter-spacing:-0.66px">heading5</div>
<div class="t" style="left:1141.48px;top:466.00px;font:12.5px/16.25px 'Liberation Mono', monospace;color:#a0a0a0;letter-spacing:-0.18px">Insert heading level 5</div>
<svg style="left:569px;top:485.40000000000003px;" width="18" height="18" viewBox="0 0 18 18"><path d="M1.6 15.8 V0.95 H16" fill="none" stroke="#c8c8c8" stroke-width="1.3"/><path d="M16 1.2 V15.8" stroke="#9a9a9a" stroke-width="1.8"/><path d="M1 16.5 H16.9" stroke="#b8b8b8" stroke-width="1.8" stroke-dasharray="1.3 1"/></svg>
<div class="t" style="left:592.20px;top:485.00px;font:15.5px/20.15px 'Liberation Mono', monospace;color:#d4d4d4;letter-spacing:-0.66px">heading6</div>
<div class="t" style="left:1141.48px;top:488.00px;font:12.5px/16.25px 'Liberation Mono', monospace;color:#a0a0a0;letter-spacing:-0.18px">Insert heading level 6</div>
<svg style="left:569px;top:507.00000000000006px;" width="18" height="18" viewBox="0 0 18 18"><path d="M1.6 15.8 V0.95 H16" fill="none" stroke="#c8c8c8" stroke-width="1.3"/><path d="M16 1.2 V15.8" stroke="#9a9a9a" stroke-width="1.8"/><path d="M1 16.5 H16.9" stroke="#b8b8b8" stroke-width="1.8" stroke-dasharray="1.3 1"/></svg>
<div class="t" style="left:592.20px;top:507.00px;font:15.5px/20.15px 'Liberation Mono', monospace;color:#d4d4d4;letter-spacing:-0.66px">horizontal rule</div>
<div class="t" style="left:1141.48px;top:509.00px;font:12.5px/16.25px 'Liberation Mono', monospace;color:#a0a0a0;letter-spacing:-0.18px">Insert horizontal rule</div>
<svg style="left:569px;top:528.6px;" width="18" height="18" viewBox="0 0 18 18"><path d="M1.6 15.8 V0.95 H16" fill="none" stroke="#c8c8c8" stroke-width="1.3"/><path d="M16 1.2 V15.8" stroke="#9a9a9a" stroke-width="1.8"/><path d="M1 16.5 H16.9" stroke="#b8b8b8" stroke-width="1.8" stroke-dasharray="1.3 1"/></svg>
<div class="t" style="left:592.20px;top:528.00px;font:15.5px/20.15px 'Liberation Mono', monospace;color:#d4d4d4;letter-spacing:-0.66px">link</div>
<div class="t" style="left:1222.00px;top:531.00px;font:12.5px/16.25px 'Liberation Mono', monospace;color:#a0a0a0;letter-spacing:-0.18px">Insert link</div>
</div>
<div style="left:1303px;top:273.2px;width:12px;height:167.5px;background:#3a3a3a;"></div>
<svg style="left:0px;top:774px;" width="430" height="19" viewBox="0 0 430 19">
<circle cx="17.3" cy="6.4" r="2.3" fill="none" stroke="#ffffff" stroke-width="1.2"/>
<circle cx="23.8" cy="10.6" r="2.3" fill="none" stroke="#ffffff" stroke-width="1.2"/>
<circle cx="17.3" cy="19" r="2.3" fill="none" stroke="#ffffff" stroke-width="1.2"/>
<path d="M17.3 8.7 V16.7 M23.8 12.9 Q23 16 18.8 17.3" fill="none" stroke="#ffffff" stroke-width="1.2"/>
<path d="M106 11.5 A6.5 6.5 0 0 1 117.5 9 M118.8 12.5 A6.5 6.5 0 0 1 107 16" fill="none" stroke="#ffffff" stroke-width="1.3"/>
<path d="M115 8.5 L118.3 9.6 L119.4 6 M109.5 16.5 L106.5 15 L105 18.5" fill="none" stroke="#ffffff" stroke-width="1.3"/>
<circle cx="148.5" cy="12" r="6.8" fill="none" stroke="#ffffff" stroke-width="1.2"/>
<path d="M145.8 9.3 L151.2 14.7 M151.2 9.3 L145.8 14.7" stroke="#ffffff" stroke-width="1.2"/>
<path d="M182 5 L189 18.5 H175 Z" fill="none" stroke="#ffffff" stroke-width="1.2" stroke-linejoin="round"/>
<path d="M182 9.5 V14" stroke="#ffffff" stroke-width="1.3"/><circle cx="182" cy="16" r="0.7" fill="#ffffff"/>
<circle cx="228.2" cy="7.5" r="2" fill="none" stroke="#ffffff" stroke-width="1.2"/>
<path d="M225.5 19 V12.5 Q225.5 10.5 228.2 10.5 Q231 10.5 231 12.5 V19" fill="none" stroke="#ffffff" stroke-width="1.2"/>
<path d="M338 19 C338 12 343 9.5 349 9.8 M346.5 5.5 L351.5 9.8 L346.5 14" fill="none" stroke="#ffffff" stroke-width="1.3" stroke-linejoin="round"/>
<circle cx="343.8" cy="17.5" r="2.5" fill="none" stroke="#ffffff" stroke-width="1.3"/>
</svg>
<div class="t" style="left:33.00px;top:778.00px;font:14.86px/19.32px 'Liberation Sans', sans-serif;color:#ffffff;-webkit-text-stroke:0.25px #ffffff;">master*</div>
<div class="t" style="left:161.00px;top:778.00px;font:14.4px/18.72px 'Liberation Sans', sans-serif;color:#ffffff;-webkit-text-stroke:0.25px #ffffff;">0</div>
<svg style="left:193.6px;top:781.2px;" width="8" height="13.299999999999955" viewBox="0 0 8 13.299999999999955"><path d="M1.38 3.49 L5 1 V12.299999999999955" fill="none" stroke="#ffffff" stroke-width="1.3" stroke-linejoin="miter"/></svg>
<div class="t" style="left:241.40px;top:778.00px;font:14.42px/18.75px 'Liberation Sans', sans-serif;color:#ffffff;-webkit-text-stroke:0.25px #ffffff;">Riccardo</div>
<svg style="left:302px;top:776px;" width="18" height="17" viewBox="0 0 18 17"><path d="M3.8 10 V7 Q3.8 4 7 4 Q10.2 4 10.2 7 V10" fill="none" stroke="#a9a9a9" stroke-width="1.4"/><rect x="2.4" y="9.7" width="9.4" height="8" rx="0.5" fill="#c3ad68"/><circle cx="12.4" cy="6.7" r="2.5" fill="#e6a10c"/><path d="M12.4 8 V17" stroke="#e6a10c" stroke-width="2"/><path d="M12.4 12.5 H14 M12.4 15 H14" stroke="#e6a10c" stroke-width="1"/></svg>
<div class="t" style="left:357.70px;top:778.00px;font:14.14px/18.38px 'Liberation Sans', sans-serif;color:#ffffff;-webkit-text-stroke:0.25px #ffffff;">Live Share</div>
<div class="t" style="left:826.60px;top:778.00px;font:13.97px/18.16px 'Liberation Sans', sans-serif;color:#ffffff;-webkit-text-stroke:0.25px #ffffff;">Ln 7, Col 8</div>
<div class="t" style="left:914.70px;top:778.00px;font:14.5px/18.85px 'Liberation Sans', sans-serif;color:#ffffff;-webkit-text-stroke:0.25px #ffffff;">Spaces: 4</div>
<div class="t" style="left:999.50px;top:778.00px;font:14.79px/19.23px 'Liberation Sans', sans-serif;color:#ffffff;-webkit-text-stroke:0.25px #ffffff;">UTF-8</div>
<div class="t" style="left:1062.00px;top:778.00px;font:14.4px/18.72px 'Liberation Sans', sans-serif;color:#ffffff;-webkit-text-stroke:0.25px #ffffff;">LF</div>
<div class="t" style="left:1097.00px;top:778.00px;font:14.66px/19.06px 'Liberation Sans', sans-serif;color:#ffffff;-webkit-text-stroke:0.25px #ffffff;">Markdown</div>
<div class="t" style="left:1205.60px;top:778.00px;font:14.8px/19.24px 'Liberation Sans', sans-serif;color:#ffffff;-webkit-text-stroke:0.25px #ffffff;">Prettier</div>
<svg style="left:1180px;top:774px;" width="154" height="19" viewBox="0 0 154 19">
<path d="M5.2 12.8 L9.6 16.8 L20 7.6 M11.8 14.8 L13.8 16.8 L23.6 7.6" fill="none" stroke="#ffffff" stroke-width="1.1"/>
<path d="M101.5 11.9 H98.1 V5.4 H108.8 V11.9 H106.6 L104.6 13.9 V11.9" fill="none" stroke="#ffffff" stroke-width="1.1" stroke-linejoin="round"/>
<circle cx="98.7" cy="13" r="2.3" fill="#0078d4" stroke="#ffffff" stroke-width="1.1"/>
<path d="M94.3 20 Q94.3 16.2 98.7 16.2 Q103.1 16.2 103.1 20" fill="none" stroke="#ffffff" stroke-width="1.1"/>
<path d="M131.6 17 Q133.2 15.2 133.2 12 V10.2 Q133.2 5.4 138 5.4 Q142.8 5.4 142.8 10.2 V12 Q142.8 15.2 144.4 17 Z M136.2 19 H139.8" fill="none" stroke="#ffffff" stroke-width="1.2" stroke-linejoin="round"/>
</svg>
</body></html>
